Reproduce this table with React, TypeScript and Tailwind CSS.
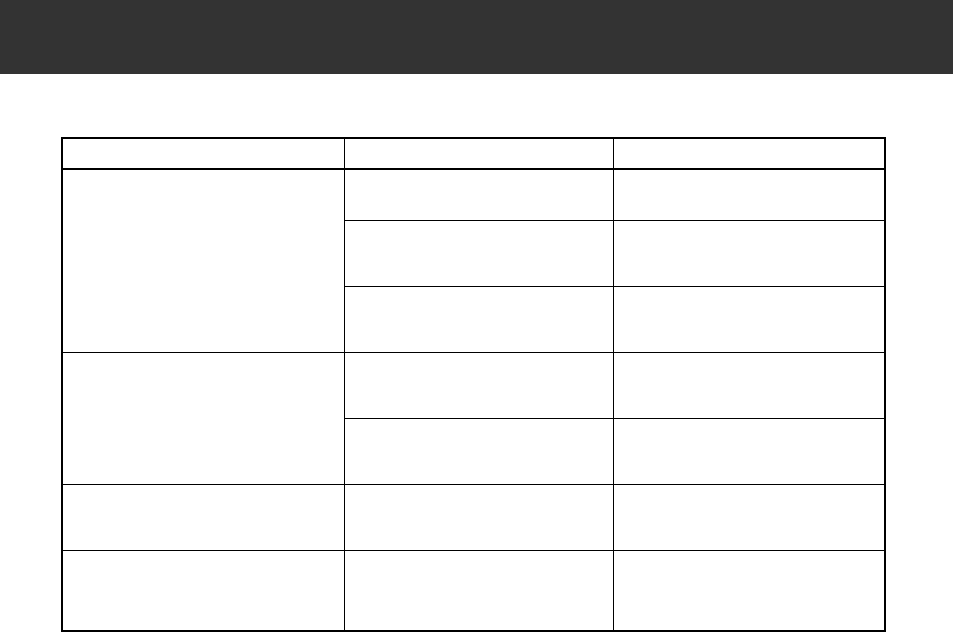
const ROW_HEIGHTS = '31px 51px 66px 66px 66px 66px 66px 79px';

function Cell({ className = '' }: { className?: string }) {
  return <div className={`border-black ${className}`} />;
}

export default function App() {
  return (
    <div className="min-h-[633px] w-full bg-white font-['Liberation_Sans',Arial,sans-serif]">
      <header className="h-[74px] w-full bg-[#333333]" />

      <div className="ml-[61px] mt-[63px] w-[825px] border-2 border-black">
        <div
          className="grid grid-cols-[282px_269px_1fr]"
          style={{ gridTemplateRows: ROW_HEIGHTS }}
        >
          {/* header */}
          <Cell className="border-r border-b-2" />
          <Cell className="border-r border-b-2" />
          <Cell className="border-b-2" />

          {/* group 1: three sub rows */}
          <Cell className="row-span-3 border-r border-b" />
          <Cell className="border-r border-b" />
          <Cell className="border-b" />
          <Cell className="border-r border-b" />
          <Cell className="border-b" />
          <Cell className="border-r border-b" />
          <Cell className="border-b" />

          {/* group 2: two sub rows */}
          <Cell className="row-span-2 border-r border-b" />
          <Cell className="border-r border-b" />
          <Cell className="border-b" />
          <Cell className="border-r border-b" />
          <Cell className="border-b" />

          {/* single rows */}
          <Cell className="border-r border-b" />
          <Cell className="border-r border-b" />
          <Cell className="border-b" />

          <Cell className="border-r" />
          <Cell className="border-r" />
          <Cell />
        </div>
      </div>
    </div>
  );
}
